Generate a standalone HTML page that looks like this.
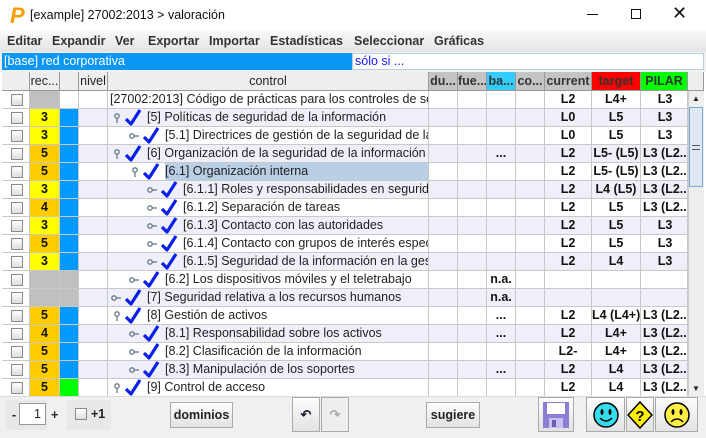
<!DOCTYPE html>
<html><head><meta charset="utf-8"><style>
*{box-sizing:border-box;margin:0;padding:0}
body{width:706px;height:438px;overflow:hidden;background:#fff;font-family:"Liberation Sans",sans-serif;font-size:12.5px;color:#222;position:relative}
.abs{position:absolute}
.title{left:0;top:0;width:706px;height:30px;background:#fff}
.menu{left:0;top:30px;width:706px;height:22px;background:linear-gradient(#fafafa,#e4e4e4);font-weight:bold;font-size:12.5px;color:#333}
.menu span{position:absolute;top:4px}
.tbl{left:2px;top:72px;width:702px;height:324px}
.hdr{position:absolute;top:0;height:19px;background:#eee;border-right:1px solid #999;border-bottom:1px solid #999;text-align:center;line-height:19px;font-size:12.5px;color:#222;overflow:hidden;white-space:nowrap}
.hg{background:#c4c4c4;font-weight:bold;color:#333}
.row{position:absolute;left:0;width:686px;height:18px}
.c{position:absolute;top:0;height:18px;border-right:1px solid #c8c8c8;border-bottom:1px solid #c8c8c8;line-height:17px;text-align:center;white-space:nowrap;overflow:hidden}
.b{font-weight:bold;color:#111}
.cb{position:absolute;left:9px;top:3px;width:12px;height:12px;border:1px solid #8a8a8a;background:linear-gradient(#fff,#ddd)}
.btn{position:absolute;border:1px solid #aaa;background:linear-gradient(#fdfdfd,#e2e2e2);font-weight:bold;text-align:center;color:#222}
</style></head><body>
<div class="abs title">
 <div class="abs" style="left:10px;top:3px;font:bold 22px 'Liberation Sans',sans-serif;color:#f5a000;font-style:italic">P</div>
 <div class="abs" style="left:30px;top:8px;font-size:12.5px;color:#111">[example] 27002:2013 &gt; valoración</div>
 <div class="abs" style="left:587px;top:14px;width:11px;height:1px;background:#111"></div>
 <div class="abs" style="left:631px;top:9px;width:10px;height:10px;border:1px solid #111"></div>
 <div class="abs" style="left:672px;top:3px;font-size:18px;color:#111">✕</div>
</div>
<div class="abs menu">
 <span style="left:7px">Editar</span><span style="left:52px">Expandir</span><span style="left:115px">Ver</span><span style="left:148px">Exportar</span><span style="left:209px">Importar</span><span style="left:270px">Estadísticas</span><span style="left:354px">Seleccionar</span><span style="left:434px">Gráficas</span>
</div>
<div class="abs" style="left:0;top:52px;width:706px;height:20px;background:#f0f0f0"></div>
<div class="abs" style="left:2px;top:53px;width:350px;height:17px;background:#0a96f5;color:#fff;line-height:17px;padding-left:2px;font-size:12.5px">[base] red corporativa</div>
<div class="abs" style="left:352px;top:53px;width:352px;height:17px;background:#fff;border:1px solid #b8cfe0;color:#1a1aff;line-height:15px;padding-left:2px">sólo si ...</div>
<div class="abs tbl" id="t">
 <div class="hdr" style="left:0;width:28px"></div>
 <div class="hdr" style="left:28px;width:30px">rec...</div>
 <div class="hdr" style="left:58px;width:19px"></div>
 <div class="hdr" style="left:77px;width:29px">nivel</div>
 <div class="hdr" style="left:106px;width:321px">control</div>
 <div class="hdr hg" style="left:427px;width:29px">du...</div>
 <div class="hdr hg" style="left:456px;width:29px">fue...</div>
 <div class="hdr hg" style="left:485px;width:29px;background:#33ccff">ba...</div>
 <div class="hdr hg" style="left:514px;width:29px">co...</div>
 <div class="hdr hg" style="left:543px;width:47px">current</div>
 <div class="hdr hg" style="left:590px;width:49px;background:#f00">target</div>
 <div class="hdr hg" style="left:639px;width:47px;background:#0f0">PILAR</div>
 <div class="hdr" style="left:686px;width:16px;background:#eee"></div>
</div>
<div class="abs" style="left:688px;top:91px;width:16px;height:305px;background:#eee;border-left:1px solid #ccc"></div>
<div class="abs" style="left:689px;top:107px;width:14px;height:80px;background:#dde8f3;border:1px solid #7aa7d8"></div>
<div class="abs" style="left:692px;top:145px;width:8px;height:5px;border-top:1px solid #555;border-bottom:1px solid #555"></div>
<div class="abs" style="left:692px;top:94px;font-size:8px">▲</div>
<div class="abs" style="left:692px;top:384px;font-size:8px">▼</div>
<div class="abs" style="left:0;top:396px;width:706px;height:42px;background:#f0f0f0;border-top:1px solid #ddd"></div>
<div class="abs" style="left:6px;top:400px;width:41px;height:30px;background:#e8e8e8"></div>
<div class="abs" style="left:12px;top:408px;font-weight:bold">-</div>
<div class="abs" style="left:19px;top:403px;width:27px;height:22px;background:#fff;border:1px solid #999;text-align:right;padding-right:4px;line-height:20px">1</div>
<div class="abs" style="left:51px;top:408px;font-weight:bold">+</div>
<div class="abs" style="left:67px;top:400px;width:44px;height:30px;background:#e8e8e8"></div>
<div class="abs" style="left:75px;top:408px;width:12px;height:12px;border:1px solid #8a8a8a;background:linear-gradient(#fff,#ddd)"></div>
<div class="abs" style="left:91px;top:407px;font-weight:bold">+1</div>
<div class="btn" style="left:170px;top:402px;width:63px;height:26px;line-height:24px">dominios</div>
<div class="btn" style="left:292px;top:397px;width:28px;height:35px;line-height:33px;font-size:13px;color:#223">↶</div>
<div class="btn" style="left:321px;top:397px;width:28px;height:35px;line-height:33px;font-size:13px;color:#aaa;background:#eee">↷</div>
<div class="btn" style="left:426px;top:402px;width:54px;height:26px;line-height:24px">sugiere</div>
<div class="btn" style="left:538px;top:397px;width:36px;height:35px"><svg width="30" height="30" viewBox="0 0 30 30" style="margin-top:2px"><rect x="2" y="2" width="26" height="26" fill="#8a7fd0"/><rect x="6" y="3" width="18" height="11" fill="#fff"/><rect x="8" y="18" width="14" height="10" fill="#c8c0f0"/><rect x="11" y="20" width="4" height="7" fill="#6a5fb0"/></svg></div>
<div class="btn" style="left:586px;top:397px;width:39px;height:35px"><svg width="30" height="30" viewBox="0 0 30 30" style="margin-top:2px"><circle cx="15" cy="15" r="12" fill="#33ddee" stroke="#000" stroke-width="1.5"/><ellipse cx="11" cy="12" rx="1.5" ry="3"/><ellipse cx="19" cy="12" rx="1.5" ry="3"/><path d="M9 18 Q15 24 21 18" fill="none" stroke="#000" stroke-width="1.5"/></svg></div>
<div class="btn" style="left:626px;top:397px;width:28px;height:35px"><svg width="26" height="30" viewBox="0 0 26 30" style="margin-top:2px"><path d="M13 2 L25 15 L13 28 L1 15Z" fill="#ffee00" stroke="#000" stroke-width="1.5"/><text x="13" y="21" font-size="15" font-weight="bold" text-anchor="middle" font-family="Liberation Sans">?</text></svg></div>
<div class="btn" style="left:655px;top:397px;width:43px;height:35px"><svg width="30" height="30" viewBox="0 0 30 30" style="margin-top:2px"><circle cx="15" cy="15" r="12" fill="#ffee44" stroke="#000" stroke-width="1.5"/><ellipse cx="11" cy="12" rx="1.5" ry="3"/><ellipse cx="19" cy="12" rx="1.5" ry="3"/><path d="M9 22 Q15 16 21 22" fill="none" stroke="#000" stroke-width="1.5"/></svg></div>
<script>
var R=[
[0,"gray","#fff",0,"[27002:2013] Código de prácticas para los controles de seguridad","","L2","L4+","L3",0],
[1,"3","#09f",1,"[5] Políticas de seguridad de la información","","L0","L5","L3",1],
[2,"3","#09f",2,"[5.1] Directrices de gestión de la seguridad de la información","","L0","L5","L3",2],
[1,"5","#09f",1,"[6] Organización de la seguridad de la información","...","L2","L5- (L5)","L3 (L2...",1],
[2,"5","#09f",1,"[6.1] Organización interna","","L2","L5- (L5)","L3 (L2...",1],
[3,"3","#09f",2,"[6.1.1] Roles y responsabilidades en seguridad","","L2","L4 (L5)","L3 (L2...",2],
[3,"4","#09f",2,"[6.1.2] Separación de tareas","","L2","L5","L3 (L2...",2],
[3,"3","#09f",2,"[6.1.3] Contacto con las autoridades","","L2","L5","L3",2],
[3,"5","#09f",2,"[6.1.4] Contacto con grupos de interés especial","","L2","L5","L3",2],
[3,"3","#09f",2,"[6.1.5] Seguridad de la información en la gestión","","L2","L4","L3",2],
[2,"gray","gray",2,"[6.2] Los dispositivos móviles y el teletrabajo","n.a.","","","",2],
[1,"gray","gray",2,"[7] Seguridad relativa a los recursos humanos","n.a.","","","",2],
[1,"5","#09f",1,"[8] Gestión de activos","...","L2","L4 (L4+)","L3 (L2...",1],
[2,"4","#09f",2,"[8.1] Responsabilidad sobre los activos","...","L2","L4+","L3 (L2...",2],
[2,"5","#09f",2,"[8.2] Clasificación de la información","","L2-","L4+","L3 (L2...",2],
[2,"5","#09f",2,"[8.3] Manipulación de los soportes","...","L2","L4","L3 (L2...",2],
[1,"5","#0f0",1,"[9] Control de acceso","","L2","L4","L3 (L2...",1]];
var t=document.getElementById('t'),h='';
var rc={"3":"#ff0","4":"#fc0","5":"#fc0"};
var ind=[0,5,23,41];
R.forEach(function(r,i){
 var bg=i%2?'#efeffa':'#fff';var y=19+i*18;
 var rb=r[1]=="gray"?"#c0c0c0":rc[r[1]];var cb=r[2]=="gray"?"#c0c0c0":r[2];
 h+='<div class="row" style="top:'+y+'px">';
 h+='<div class="c" style="left:0;width:28px;background:#fff"><div class="cb"></div></div>';
 h+='<div class="c b" style="left:28px;width:30px;background:'+rb+'">'+(r[1]=="gray"?"":r[1])+'</div>';
 h+='<div class="c" style="left:58px;width:19px;background:'+cb+'"></div>';
 h+='<div class="c" style="left:77px;width:29px;background:'+bg+'"></div>';
 var x=ind[r[0]],ic='';
 if(r[0]>0){
  ic+=r[3]==1?'<svg class="abs" style="left:'+x+'px;top:4px" width="8" height="11"><circle cx="4" cy="3" r="2.2" fill="none" stroke="#678" stroke-width="1.3"/><line x1="4" y1="5" x2="4" y2="10" stroke="#678" stroke-width="1.3"/></svg>'
   :'<svg class="abs" style="left:'+(x-2)+'px;top:5px" width="11" height="8"><circle cx="3" cy="4" r="2.2" fill="none" stroke="#678" stroke-width="1.3"/><line x1="5" y1="4" x2="10" y2="4" stroke="#678" stroke-width="1.3"/></svg>';
  ic+='<svg class="abs" style="left:'+(x+11)+'px;top:0px" width="18" height="18"><path d="M2 10 L7 15 L16 1" fill="none" stroke="#0a1fe8" stroke-width="3.2" stroke-linejoin="round"/></svg>';
 }
 var tx=r[0]>0?x+34:2;
 var sel=i==4?'background:#b8cfe5;padding-right:100%;':'';
 h+='<div class="c" style="left:106px;width:321px;background:'+bg+';text-align:left">'+ic+'<span class="abs" style="left:'+tx+'px;top:0;color:#222;'+sel+'">'+r[4]+'</span></div>';
 h+='<div class="c" style="left:427px;width:29px;background:'+bg+'"></div>';
 h+='<div class="c" style="left:456px;width:29px;background:'+bg+'"></div>';
 h+='<div class="c b" style="left:485px;width:29px;background:'+bg+'">'+r[5]+'</div>';
 h+='<div class="c" style="left:514px;width:29px;background:'+bg+'"></div>';
 h+='<div class="c b" style="left:543px;width:47px;background:'+bg+'">'+r[6]+'</div>';
 h+='<div class="c b" style="left:590px;width:49px;background:'+bg+'">'+r[7]+'</div>';
 h+='<div class="c b" style="left:639px;width:47px;background:'+bg+';text-align:left;padding-left:2px">'+(r[8].length<4?'<span style="display:block;text-align:center">'+r[8]+'</span>':r[8])+'</div>';
 h+='</div>';
});
t.insertAdjacentHTML('beforeend',h);
</script>
</body></html>
